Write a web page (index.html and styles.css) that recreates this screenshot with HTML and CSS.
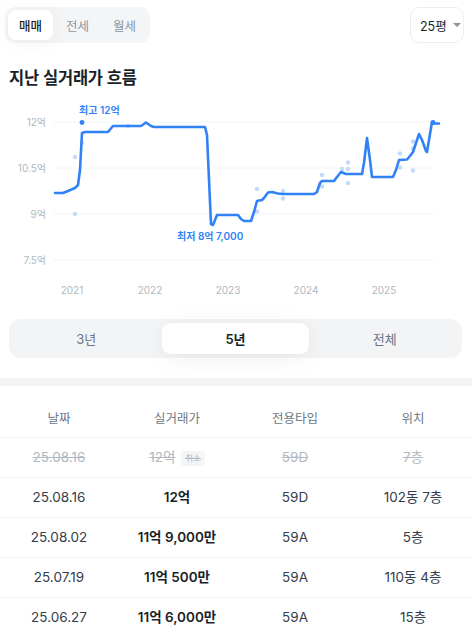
FILE: index.html
```html
<!DOCTYPE html>
<html lang="ko">
<head>
  <meta charset="utf-8">
  <title>실거래가</title>
  <link rel="stylesheet" href="styles.css">
</head>
<body>
  <div class="top">
    <div class="tabs">
      <button class="tab active">매매</button>
      <button class="tab">전세</button>
      <button class="tab">월세</button>
    </div>
    <button class="size">25평 <span class="caret"></span></button>
  </div>

  <h2 class="title">지난 실거래가 흐름</h2>

  <svg class="chart" width="472" height="200" viewBox="0 100 472 200">
    <g class="grid">
      <line x1="53" y1="122" x2="434" y2="122"/>
      <line x1="53" y1="168" x2="434" y2="168"/>
      <line x1="53" y1="214" x2="434" y2="214"/>
      <line x1="53" y1="260" x2="434" y2="260"/>
    </g>
    <g class="ylabels">
      <text x="46" y="126">12억</text>
      <text x="46" y="172">10.5억</text>
      <text x="46" y="218">9억</text>
      <text x="46" y="264">7.5억</text>
    </g>
    <g class="xlabels">
      <text x="72" y="294">2021</text>
      <text x="150" y="294">2022</text>
      <text x="228" y="294">2023</text>
      <text x="306" y="294">2024</text>
      <text x="384" y="294">2025</text>
    </g>
    <g class="dots">
      <circle cx="75" cy="157" r="2.2"/>
      <circle cx="82" cy="143" r="2.2"/>
      <circle cx="75" cy="214" r="2.2"/>
      <circle cx="128" cy="126" r="2.2"/>
      <circle cx="257" cy="189" r="2.2"/>
      <circle cx="257" cy="211.5" r="2.2"/>
      <circle cx="283" cy="191" r="2.2"/>
      <circle cx="283" cy="198.5" r="2.2"/>
      <circle cx="322" cy="175" r="2.2"/>
      <circle cx="322" cy="186.5" r="2.2"/>
      <circle cx="342" cy="169" r="2.2"/>
      <circle cx="348" cy="162.5" r="2.2"/>
      <circle cx="348" cy="169" r="2.2"/>
      <circle cx="348" cy="183" r="2.2"/>
      <circle cx="400" cy="153.5" r="2.2"/>
      <circle cx="400" cy="167.5" r="2.2"/>
      <circle cx="413" cy="141.5" r="2.2"/>
      <circle cx="413" cy="148.5" r="2.2"/>
      <circle cx="413" cy="170.5" r="2.2"/>
    </g>
    <polyline class="line" points="55,193 63,193 68,191 75,188 78,185 80,170 82,133 85,132 108,132 113,126 141,126 146,122.5 151,126 154,127 205,127 207,135 211,224 213,225 217,215 238,215 241,219 244,221 251,221 254,212 257,201 262,200 264,198 268,192.5 272,192 278,193.5 282,194 314,194 317,192 320,183 322,181 334,181 337,177 341,172 346,174 362,174 364,163 367,138 370,160 372,177 393,177 396,170 399,160 407,159.5 410,156 413,152 416,143 419,134 422,140 426,151 427,152 429,140 432,122 434,123.5 439,123.5"/>
    <circle class="peak" cx="82" cy="122.5" r="2.4"/>
    <circle class="peak" cx="433" cy="122.5" r="2.4"/>
    <text class="note" x="79" y="114">최고 12억</text>
    <text class="note" x="177" y="240">최저 8억 7,000</text>
  </svg>

  <div class="period">
    <button class="seg">3년</button>
    <button class="seg active">5년</button>
    <button class="seg">전체</button>
  </div>

  <div class="band"></div>

  <table class="deals">
    <thead>
      <tr><th>날짜</th><th>실거래가</th><th>전용타입</th><th>위치</th></tr>
    </thead>
    <tbody>
      <tr class="cancel">
        <td><s>25.08.16</s></td>
        <td><s>12억</s> <span class="badge">취소</span></td>
        <td><s>59D</s></td>
        <td><s>7층</s></td>
      </tr>
      <tr><td>25.08.16</td><td class="price">12억</td><td>59D</td><td>102동 7층</td></tr>
      <tr><td>25.08.02</td><td class="price">11억 9,000만</td><td>59A</td><td>5층</td></tr>
      <tr><td>25.07.19</td><td class="price">11억 500만</td><td>59A</td><td>110동 4층</td></tr>
      <tr><td>25.06.27</td><td class="price">11억 6,000만</td><td>59A</td><td>15층</td></tr>
    </tbody>
  </table>
</body>
</html>
```

FILE: styles.css
```css
body {
  margin: 0;
  font-family: Inter, "Noto Sans CJK KR", sans-serif;
  color: #191f28;
  background: #fff;
  overflow: hidden;
}

button {
  font-family: inherit;
  border: none;
  background: none;
  cursor: pointer;
  padding: 0;
}

.top {
  display: flex;
  justify-content: space-between;
  align-items: flex-start;
  padding: 7px 8px 0 5px;
}

.tabs {
  display: flex;
  gap: 2px;
  padding: 3px;
  background: #f4f5f7;
  border-radius: 10px;
}

.tab {
  width: 45px;
  height: 30px;
  font-size: 12.5px;
  color: #8b95a1;
  border-radius: 8px;
}

.tab.active {
  background: #fff;
  color: #191f28;
  font-weight: 500;
  box-shadow: 0 2px 20px rgba(0, 0, 0, 0.05);
}

.size {
  display: flex;
  align-items: center;
  gap: 6px;
  width: 54px;
  height: 36px;
  padding-left: 9px;
  font-size: 12.5px;
  color: #191f28;
  border: 1px solid #eceef1;
  border-radius: 9px;
  box-sizing: border-box;
}

.caret {
  width: 0;
  height: 0;
  border-left: 4px solid transparent;
  border-right: 4px solid transparent;
  border-top: 4px solid #8b95a1;
}

.title {
  margin: 23px 0 0 9px;
  font-size: 16.5px;
  font-weight: 600;
  line-height: 24px;
  letter-spacing: -0.2px;
}

.chart {
  display: block;
  margin-top: 10px;
}

.grid line {
  stroke: #f2f4f6;
  stroke-width: 1;
}

.ylabels text {
  font-size: 10px;
  fill: #b0b8c1;
  text-anchor: end;
}

.xlabels text {
  font-size: 10px;
  fill: #b0b8c1;
  text-anchor: middle;
}

.dots circle {
  fill: #c3dafc;
}

.line {
  fill: none;
  stroke: #3182f6;
  stroke-width: 2.6;
  stroke-linejoin: round;
  stroke-linecap: round;
}

.peak {
  fill: #3182f6;
}

.note {
  font-size: 10px;
  font-weight: 600;
  fill: #3182f6;
}

.period {
  display: grid;
  grid-template-columns: repeat(3, 1fr);
  gap: 3px;
  margin: 19px 10px 0 9px;
  padding: 4px;
  background: #f2f4f6;
  border-radius: 12px;
}

.seg {
  height: 31px;
  font-size: 13px;
  color: #6b7684;
  border-radius: 9px;
}

.seg.active {
  background: #fff;
  color: #191f28;
  font-weight: 600;
  box-shadow: 0 4px 26px rgba(0, 0, 0, 0.06);
}

.band {
  height: 8px;
  margin-top: 20px;
  background: #f2f4f6;
}

.deals {
  width: 100%;
  border-collapse: collapse;
  table-layout: fixed;
}

.deals th {
  height: 51px;
  padding: 16px 0 0;
  font-size: 12.5px;
  line-height: 18px;
  font-weight: 400;
  color: #6b7684;
  border-bottom: 1px solid #f2f4f6;
  box-sizing: border-box;
}

.deals td {
  height: 39px;
  padding: 0;
  text-align: center;
  font-size: 13.5px;
  line-height: 18px;
  color: #333d4b;
  border-bottom: 1px solid #f2f4f6;
}

.deals td.price {
  font-weight: 600;
  color: #191f28;
}

.cancel td {
  color: #b0b8c1;
}

.badge {
  display: inline-block;
  padding: 2px 4px;
  margin-left: 2px;
  font-size: 8.5px;
  line-height: 11px;
  color: #b0b8c1;
  background: #f4f5f7;
  border-radius: 3px;
  text-decoration: line-through;
  vertical-align: 1px;
}
```
